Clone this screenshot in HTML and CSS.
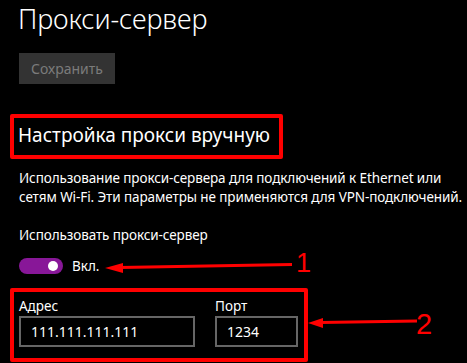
FILE: index.html
```html
<!doctype html>
<html>
  <head>
    <meta charset="utf-8">
    <title>Прокси-сервер</title>
    <link rel="stylesheet" href="styles.css">
  </head>
  <body>
    <div id="page">
      <h1 class="title">Прокси-сервер</h1>
      <button class="save" disabled>Сохранить</button>

      <div class="mark mark-head">
        <h2>Настройка прокси вручную</h2>
      </div>

      <p class="desc">Использование прокси-сервера для подключений к Ethernet или
        сетям Wi-Fi. Эти параметры не применяются для VPN-подключений.</p>

      <div class="opt-label">Использовать прокси-сервер</div>
      <div class="switch-row">
        <span class="switch"><span class="knob"></span></span>
        <span class="switch-text">Вкл.</span>
      </div>

      <div class="mark mark-fields">
        <div class="field">
          <label for="addr">Адрес</label>
          <input type="text" id="addr" class="addr" value="111.111.111.111">
        </div>
        <div class="field">
          <label for="port">Порт</label>
          <input type="text" id="port" class="port" value="1234">
        </div>
      </div>

      <!-- annotations -->
      <svg class="notes" width="467" height="363" viewBox="0 0 467 363">
        <line x1="120" y1="267.5" x2="292" y2="264.5" stroke="#ff0000" stroke-width="3"/>
        <polygon points="105,268 123,263 123,273" fill="#ff0000"/>
        <text x="296" y="272" class="num">1</text>

        <line x1="320" y1="322.5" x2="417" y2="321" stroke="#ff0000" stroke-width="3"/>
        <polygon points="308,323 323,318 323,328" fill="#ff0000"/>
        <text x="416" y="334" class="num num2">2</text>
      </svg>
    </div>
  </body>
</html>
```

FILE: styles.css
```css
html, body
{margin:0;
padding:0;
background:#000;}

#page
{position:relative;
width:467px;
height:363px;
overflow:hidden;
padding:0 0 0 19px;
box-sizing:border-box;
color:#fff;
font-family:"Noto Sans","Open Sans",sans-serif;}

h1.title
{margin:0;
padding:2px 0 0 0;
margin-left:-1px;
font-size:27px;
font-weight:300;
line-height:34px;
letter-spacing:-0.1px;}

button.save
{display:block;
margin:17px 0 0 0;
width:96px;
height:31px;
border:none;
background:#333;
color:#7b7b7b;
font-family:inherit;
font-size:14px;
padding:0 0 1px 0;}

.mark
{border:4px solid #ff0000;
border-radius:2px;
margin-left:-9px;
box-sizing:border-box;}

.mark-head
{margin-top:30px;
width:273px;
height:45px;
padding:0 0 0 4px;}

.mark-head h2
{margin:0;
font-size:19px;
font-weight:400;
line-height:35px;
white-space:nowrap;
letter-spacing:0;}

p.desc
{margin:10px 0 0 0;
font-size:13.5px;
line-height:19px;
width:450px;
letter-spacing:-0.1px;}

.opt-label
{margin-top:19px;
font-size:13.5px;
line-height:19px;
letter-spacing:-0.1px;}

.switch-row
{display:flex;
align-items:center;
gap:9px;
margin-top:12px;
height:18px;}

.switch
{display:flex;
align-items:center;
justify-content:flex-end;
width:44px;
height:16px;
border-radius:8px;
background:#881798;
padding:0 5px;
box-sizing:border-box;}

.knob
{width:10px;
height:10px;
border-radius:50%;
background:#fff;}

.switch-text
{font-size:13.5px;
line-height:18px;}

.mark-fields
{display:flex;
gap:20px;
margin-top:13px;
width:298px;
height:74px;
padding:4px 0 0 5px;}

.field
{display:flex;
flex-direction:column;}

.field label
{font-size:13.5px;
line-height:20px;}

.field input
{height:31px;
box-sizing:border-box;
border:2px solid #666;
background:#000;
color:#fff;
font-family:inherit;
font-size:14px;
padding:0 0 0 10px;
outline:none;}

.field input.addr {width:176px;}
.field input.port {width:83px;}

svg.notes
{position:absolute;
left:0;
top:0;}

.num
{fill:#ff0000;
font-family:"Liberation Sans",Arial,sans-serif;
font-size:27px;}

.num2 {font-size:29px;}
```
